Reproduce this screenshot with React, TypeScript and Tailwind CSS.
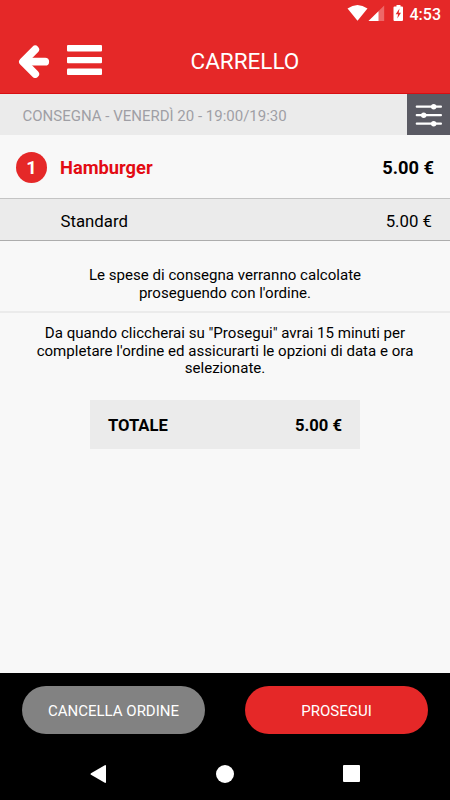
import type { ReactNode } from "react";

const order = {
  slot: "CONSEGNA - VENERDÌ 20 - 19:00/19:30",
  total: "5.00 €",
  items: [{ qty: 1, name: "Hamburger", price: "5.00 €", variant: "Standard", variantPrice: "5.00 €" }],
};

function StatusBar() {
  return (
    <div className="flex h-7 items-center justify-end pr-[9px] text-white">
      <svg width="58" height="28" viewBox="0 0 58 28" fill="white">
        <path d="M0.500 8.600 Q10.500 1.400 20.500 8.600 L10.500 20.800 Z" />
        <path d="M37.200 5.500 V21 H21.500 Z" opacity="0.3" />
        <path d="M31.500 11.200 V21 H21.500 Z" />
        <path d="M49.500 5 h4 v1.500 h1.500 q1 0 1 1 V20 q0 1 -1 1 h-7.500 q-1 0 -1 -1 V7.500 q0 -1 1 -1 h2 Z" />
        <path d="M52.500 8.500 L48.700 14.300 h2.400 L50.300 18.500 L54 12.800 h-2.300 Z" fill="#e52828" />
      </svg>
      <span className="ml-[5px] pt-[2px] text-[16px] leading-7 font-medium">4:53</span>
    </div>
  );
}

function Header() {
  return (
    <header className="h-[94px] border-b border-[#d80f12] bg-[#e52828]">
      <StatusBar />
      <div className="flex h-[66px] items-center text-white">
        <div className="flex w-[122px] items-center pl-[18px]">
          <svg width="32" height="34" viewBox="0 0 32 34" fill="none" stroke="white" strokeLinecap="round" strokeLinejoin="round">
            <path d="M17.200 5.500 L5 17.700 L17.200 29.900" strokeWidth="7.800" />
            <path d="M6 17.700 H27.200" strokeWidth="7.800" />
          </svg>
          <svg className="ml-[17px]" width="35" height="34" viewBox="0 0 35 34" fill="white">
            <rect y="1" width="35" height="6.500" rx="1" />
            <rect y="12.900" width="35" height="6.300" rx="1" />
            <rect y="24.600" width="35" height="6.300" rx="1" />
          </svg>
        </div>
        <h1 className="ml-[68.500px] text-[22.500px] leading-none whitespace-nowrap">CARRELLO</h1>
      </div>
    </header>
  );
}

function SlotBar() {
  return (
    <div className="flex h-[41px] bg-[#ebebeb]">
      <p className="flex-1 pl-[22.500px] text-[15px] leading-[45px] text-[#9f9fa5]">{order.slot}</p>
      <button className="flex w-[43px] items-center justify-center bg-[#5a5a63]">
        <svg width="43" height="41" viewBox="0 0 43 41" fill="white">
          <rect x="8.700" y="11.600" width="26.300" height="2.200" rx="1" />
          <rect x="8.700" y="20.100" width="26.300" height="2.200" rx="1" />
          <rect x="8.700" y="28.600" width="26.300" height="2.200" rx="1" />
          <circle cx="26.700" cy="12.700" r="2.700" />
          <circle cx="16.700" cy="21.200" r="2.700" />
          <circle cx="26.700" cy="29.700" r="2.700" />
        </svg>
      </button>
    </div>
  );
}

function PillButton({ className, children }: { className: string; children: ReactNode }) {
  return (
    <button className={`h-[48px] w-[183px] rounded-full pt-[2px] text-[15px] text-white ${className}`}>
      {children}
    </button>
  );
}

export default function App() {
  return (
    <div className="flex h-[800px] w-[450px] flex-col overflow-hidden bg-[#f8f8f8] font-[Roboto,sans-serif] text-black">
      <Header />
      <SlotBar />

      <main className="flex-1">
        {order.items.map((item) => (
          <div key={item.name}>
            <div className="flex h-[64px] items-center border-b border-[#c4c4c4] pt-px pr-4 pl-4 text-[18.300px] font-bold">
              <span className="flex size-[31px] items-center justify-center rounded-full bg-[#e52828] pt-px text-white">
                {item.qty}
              </span>
              <span className="ml-[13px] flex-1 pt-px text-[#e30b13]">{item.name}</span>
              <span className="pt-px">{item.price}</span>
            </div>
            <div className="flex h-[42px] items-center justify-between border-b border-[#adadad] bg-[#ebebeb] pt-[4px] pr-[18px] pl-[60.500px] text-[16.800px]">
              <span>{item.variant}</span>
              <span>{item.variantPrice}</span>
            </div>
          </div>
        ))}

        <p className="h-[72px] border-b-2 border-[#ebebeb] pt-[26px] text-center text-[15.080px] leading-[17.500px]">
          Le spese di consegna verranno calcolate
          <br />
          proseguendo con l'ordine.
        </p>
        <p className="pt-[12px] text-center text-[15.080px] leading-[17.500px]">
          Da quando cliccherai su "Prosegui" avrai 15 minuti per
          <br />
          completare l'ordine ed assicurarti le opzioni di data e ora
          <br />
          selezionate.
        </p>

        <div className="mx-auto mt-[22.500px] flex h-[49px] w-[270px] items-center justify-between bg-[#ebebeb] px-[18px] pt-[4px] text-[16.600px] font-bold">
          <span>TOTALE</span>
          <span>{order.total}</span>
        </div>
      </main>

      <footer className="h-[127px] bg-black">
        <div className="flex justify-between px-[22px] pt-[13px]">
          <PillButton className="bg-[#828282]">CANCELLA ORDINE</PillButton>
          <PillButton className="bg-[#e52828]">PROSEGUI</PillButton>
        </div>
        <nav className="flex h-[66px] items-center justify-between pt-[13px] pr-[90px] pl-[90px]">
          <svg width="16" height="18" viewBox="0 0 16 18" fill="white">
            <path d="M14.800 0.200 Q16 -0.300 16 1 V17 Q16 18.300 14.800 17.800 L1 9.800 Q0 9 1 8.200 Z" />
          </svg>
          <span className="size-[18px] rounded-full bg-white" />
          <span className="size-[17px] rounded-[1px] bg-white" />
        </nav>
      </footer>
    </div>
  );
}
